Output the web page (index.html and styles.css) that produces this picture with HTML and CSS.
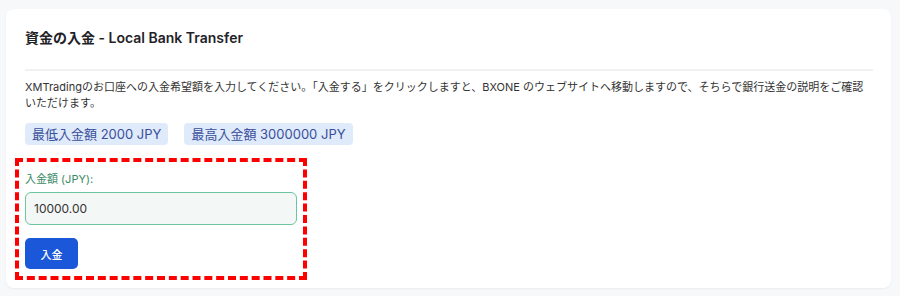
FILE: index.html
```html
<!DOCTYPE html>
<html lang="ja">
<head>
    <meta charset="UTF-8">
    <meta name="viewport" content="width=device-width, initial-scale=1.0">
    <title>資金の入金 - Local Bank Transfer</title>
    <link rel="stylesheet" href="styles.css">
</head>
<body>
    <div class="card">
        <div class="card-header">
            <h2 class="title">資金の入金 - Local Bank Transfer</h2>
        </div>
        <p class="desc">XMTradingのお口座への入金希望額を入力してください。「入金する」をクリックしますと、BXONE のウェブサイトへ移動しますので、そちらで銀行送金の説明をご確認いただけます。</p>
        <div class="limits">
            <span class="badge">最低入金額 2000 JPY</span>
            <span class="badge">最高入金額 3000000 JPY</span>
        </div>
        <form class="deposit-form">
            <label class="label" for="amount">入金額 (JPY):</label>
            <input class="amount" id="amount" type="text" value="10000.00">
            <button class="submit" type="button">入金</button>
        </form>
    </div>
</body>
</html>
```

FILE: styles.css
```css
body {
    font-family: Inter, "Noto Sans CJK JP", sans-serif;
    background-color: #f7f8fa;
    margin: 0;
    padding: 9px 9px 7px 6px;
}

.card {
    background: #ffffff;
    border-radius: 8px;
    box-shadow: 0 1px 2px rgba(0, 0, 0, 0.05);
    padding: 0 18px 8px 19px;
}

.card-header {
    padding: 19px 0 21px;
    border-bottom: 2px solid #f0f1f3;
}

.title {
    margin: 0;
    font-size: 14px;
    line-height: 20px;
    font-weight: 600;
    color: #1f2328;
}

.desc {
    margin: 8px 0 12px;
    font-size: 11px;
    line-height: 16px;
    color: #333;
}

.limits {
    display: flex;
    gap: 16px;
}

.badge {
    display: inline-block;
    background: #dfeafb;
    color: #3a4f9a;
    font-size: 13px;
    line-height: 22px;
    padding: 0 7px;
    border-radius: 4px;
}

.deposit-form {
    display: flex;
    flex-direction: column;
    align-items: flex-start;
    box-sizing: border-box;
    width: 292px;
    margin: 13px 0 0 -10px;
    padding: 9px 6px 7px 6px;
    border: 4px dashed #ff0000;
}

.label {
    font-size: 11px;
    line-height: 16px;
    color: #3a8a66;
}

.amount {
    box-sizing: border-box;
    width: 100%;
    height: 33px;
    margin-top: 5px;
    padding: 0 8px;
    font-family: inherit;
    font-size: 12px;
    color: #333;
    background: #f3f8f6;
    border: 1px solid #6cc4a1;
    border-radius: 6px;
}

.submit {
    margin-top: 13px;
    width: 53px;
    height: 31px;
    background-color: #1b57d9;
    color: #fff;
    border: none;
    border-radius: 5px;
    font-family: inherit;
    font-size: 11px;
    font-weight: 500;
    cursor: pointer;
}
```
